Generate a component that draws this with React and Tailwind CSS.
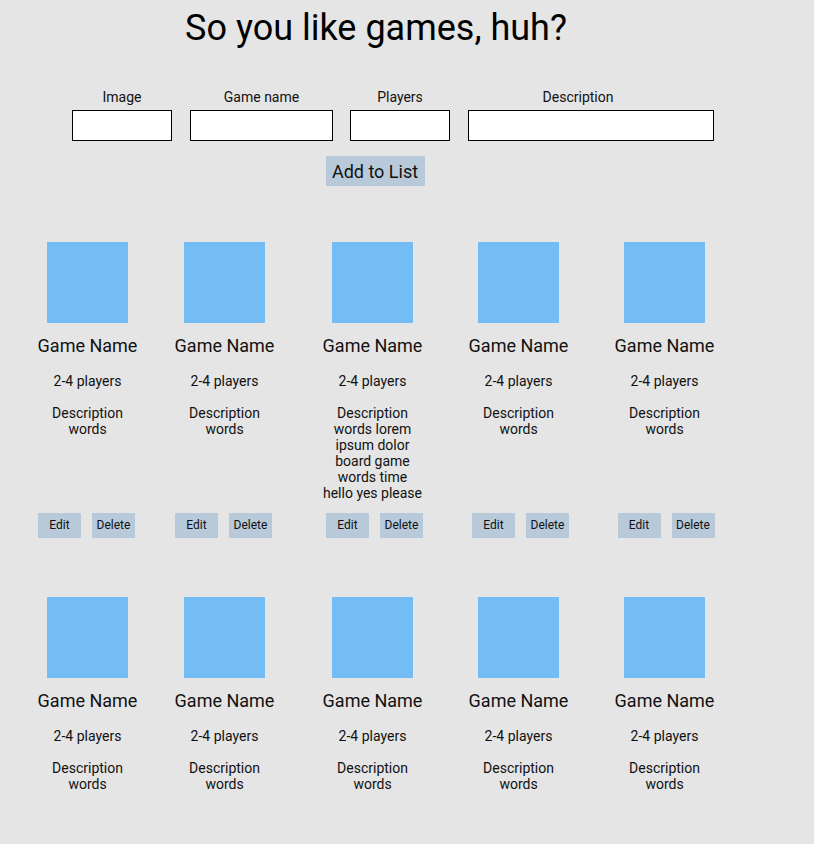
import React from "react";

const font = { fontFamily: "Roboto, 'Liberation Sans', sans-serif" };

const cards = [
  { ml: "ml-[32px]", desc: ["Description", "words"], bs: "-ml-[2px]" },
  { ml: "ml-[26px]", desc: ["Description", "words"], bs: "-ml-[2px]" },
  { ml: "ml-[37px]", desc: ["Description", "words lorem", "ipsum dolor", "board game", "words time", "hello yes please"], bs: "ml-[4px]" },
  { ml: "ml-[35px]", desc: ["Description", "words"], bs: "ml-[4px]" },
  { ml: "ml-[35px]", desc: ["Description", "words"], bs: "ml-[3px]" },
];

const cards2 = cards.map((c) => ({ ...c, desc: ["Description", "words"] }));

function Card({ c, buttons }) {
  return (
    <div className={`${c.ml} w-[111px] flex flex-col items-center text-center text-[#111]`}>
      <div className="w-[81px] h-[81px] bg-[#74bcf4]" />
      <div className="mt-[12px] text-[18px] leading-[22px]">Game Name</div>
      <div className="mt-[16px] text-[14px] leading-[16px]">2-4 players</div>
      <div className="mt-[16px] text-[14px] leading-[16px] flex-1">
        {c.desc.map((l, i) => (
          <div key={i} className="whitespace-nowrap">{l}</div>
        ))}
      </div>
      {buttons && (
        <div className={`mt-[12px] flex gap-[11px] ${c.bs}`}>
          <div className="w-[43px] h-[25px] bg-[#b8c9d9] text-[12px] leading-[25px] text-center">Edit</div>
          <div className="w-[43px] h-[25px] bg-[#b8c9d9] text-[12px] leading-[25px] text-center">Delete</div>
        </div>
      )}
    </div>
  );
}

export default function App() {
  return (
    <div className="min-h-[844px] w-full bg-[#e5e5e5] overflow-hidden" style={font}>
      <div className="w-[752px]">
        <h1 className="pt-[7px] text-center text-[36px] leading-[42px] text-black">So you like games, huh?</h1>
        <div className="mt-[40px] pl-[72px] flex text-[14px] leading-[16px] text-[#111]">
          <div className="w-[100px] flex flex-col items-center">
            <div>Image</div>
            <div className="w-[100px] mt-[5px] h-[31px] bg-white border border-black" />
          </div>
          <div className="ml-[18px] w-[143px] flex flex-col items-center">
            <div>Game name</div>
            <div className="w-[143px] mt-[5px] h-[31px] bg-white border border-black" />
          </div>
          <div className="ml-[17px] w-[100px] flex flex-col items-center">
            <div>Players</div>
            <div className="w-[100px] mt-[5px] h-[31px] bg-white border border-black" />
          </div>
          <div className="ml-[18px] w-[246px] flex flex-col items-center">
            <div className="pr-[26px]">Description</div>
            <div className="w-[246px] mt-[5px] h-[31px] bg-white border border-black" />
          </div>
        </div>
        <div className="mt-[15px] flex justify-center">
          <div className="mr-[2px] w-[99px] h-[30px] bg-[#b8c9d9] text-[18px] leading-[31px] text-center text-[#111]">Add to List</div>
        </div>
        <div className="mt-[56px] flex">
          {cards.map((c, i) => (
            <Card key={i} c={c} buttons />
          ))}
        </div>
        <div className="mt-[59px] flex">
          {cards2.map((c, i) => (
            <Card key={i} c={c} buttons={false} />
          ))}
        </div>
      </div>
    </div>
  );
}
